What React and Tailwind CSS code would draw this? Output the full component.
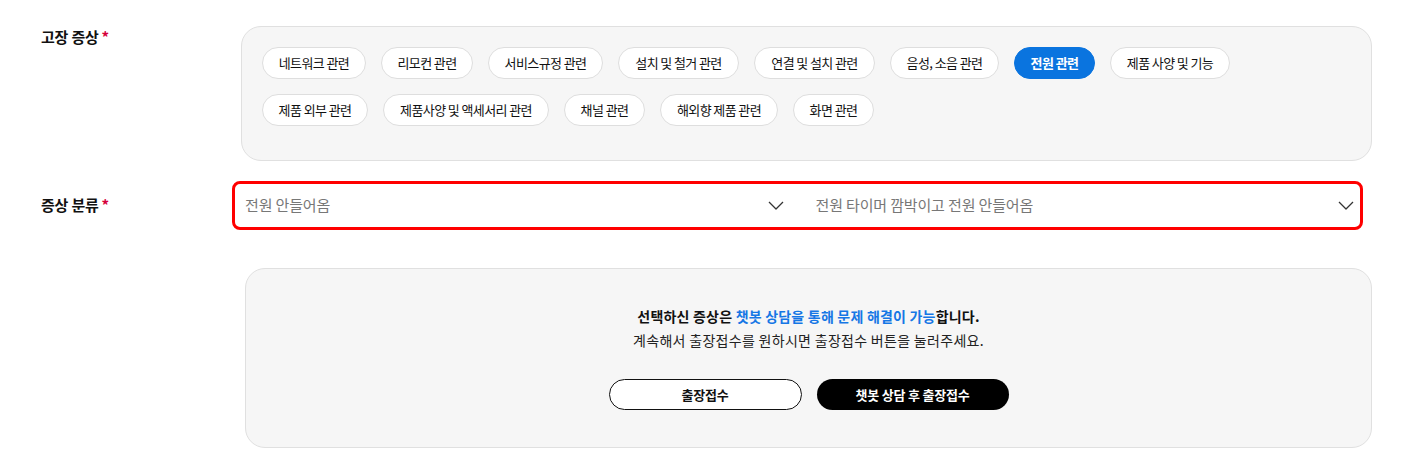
import React, { useState } from 'react';

const rowOne = [
  { label: '네트워크 관련', w: 'w-[104px]' },
  { label: '리모컨 관련', w: 'w-[92px]' },
  { label: '서비스규정 관련', w: 'w-[115px]' },
  { label: '설치 및 철거 관련', w: 'w-[121px]' },
  { label: '연결 및 설치 관련', w: 'w-[121px]' },
  { label: '음성, 소음 관련', w: 'w-[109px]' },
  { label: '전원 관련', w: 'w-[81px]' },
  { label: '제품 사양 및 기능', w: 'w-[120px]' },
];

const rowTwo = [
  { label: '제품 외부 관련', w: 'w-[106px]' },
  { label: '제품사양 및 액세서리 관련', w: 'w-[166px]' },
  { label: '채널 관련', w: 'w-[81px]' },
  { label: '해외향 제품 관련', w: 'w-[118px]' },
  { label: '화면 관련', w: 'w-[81px]' },
];

const Chevron = () => (
  <svg width="16" height="9" viewBox="0 0 16 9" fill="none">
    <polyline points="1,1 8,8 15,1" stroke="#333" strokeWidth="1.3" strokeLinejoin="round" />
  </svg>
);

const Label = ({ children }) => (
  <div className="w-[200px] shrink-0 text-[15px] font-bold tracking-[-0.2px] text-[#111]">
    {children}
    <span className="ml-[3px] text-[#d6003a]">*</span>
  </div>
);

const SelectBox = ({ value }) => (
  <div className="flex h-[43px] flex-1 items-center justify-between pl-[10px] pr-[6px]">
    <span className="text-[15px] tracking-[-0.15px] text-[#777]">{value}</span>
    <Chevron />
  </div>
);

export default function App() {
  const [active, setActive] = useState('전원 관련');

  const Chip = ({ item }) => {
    const on = item.label === active;
    return (
      <button
        onClick={() => setActive(item.label)}
        className={`${item.w} flex h-8 items-center justify-center rounded-full border text-[13px] tracking-[-0.6px] ${
          on ? 'border-[#0a74df] bg-[#0a74df] font-bold text-white' : 'border-[#dedede] bg-white text-[#111]'
        }`}
      >
        {item.label}
      </button>
    );
  };

  return (
    <div
      className="min-h-screen bg-white px-[41px] pt-[26px]"
      style={{ fontFamily: '"Noto Sans CJK KR", "Noto Sans", sans-serif' }}
    >
      {/* 고장 증상 */}
      <div className="flex items-start">
        <Label>고장 증상</Label>
        <div className="w-[1131px] rounded-[20px] border border-[#e0e0e0] bg-[#f6f6f6] pb-[34px] pl-[20px] pr-[20px] pt-[20px]">
          <div className="flex flex-col gap-[15px]">
            <div className="flex gap-[15px]">
              {rowOne.map((item) => (
                <Chip key={item.label} item={item} />
              ))}
            </div>
            <div className="flex gap-[15px]">
              {rowTwo.map((item) => (
                <Chip key={item.label} item={item} />
              ))}
            </div>
          </div>
        </div>
      </div>

      {/* 증상 분류 */}
      <div className="mt-[20px] flex items-center">
        <Label>증상 분류</Label>
        <div className="ml-[-9px] flex w-[1131px] gap-[16px] rounded-[8px] border-[3px] border-[#ff0000] bg-white">
          <SelectBox value="전원 안들어옴" />
          <SelectBox value="전원 타이머 깜박이고 전원 안들어옴" />
        </div>
      </div>

      {/* 안내 */}
      <div className="mt-[38px] flex">
        <div className="w-[204px] shrink-0" />
        <div className="w-[1127px] rounded-[20px] border border-[#e0e0e0] bg-[#f6f6f6] pb-[37px] pt-[36px] text-center">
          <p className="text-[14px] font-bold leading-[23.5px] tracking-[0.2px] text-[#111]">
            선택하신 증상은 <span className="text-[#1677e5]">챗봇 상담을 통해 문제 해결이 가능</span>합니다.
          </p>
          <p className="text-[14px] leading-[23.5px] tracking-[0.3px] text-[#222]">
            계속해서 출장접수를 원하시면 출장접수 버튼을 눌러주세요.
          </p>
          <div className="mt-[27px] flex justify-center gap-[15px]">
            <button className="h-[31px] w-[193px] rounded-full border border-[#111] bg-white text-[13px] font-bold tracking-[-0.2px] text-[#111]">
              출장접수
            </button>
            <button className="h-[31px] w-[192px] rounded-full bg-black text-[13px] font-bold tracking-[-0.2px] text-white">
              챗봇 상담 후 출장접수
            </button>
          </div>
        </div>
      </div>
    </div>
  );
}
